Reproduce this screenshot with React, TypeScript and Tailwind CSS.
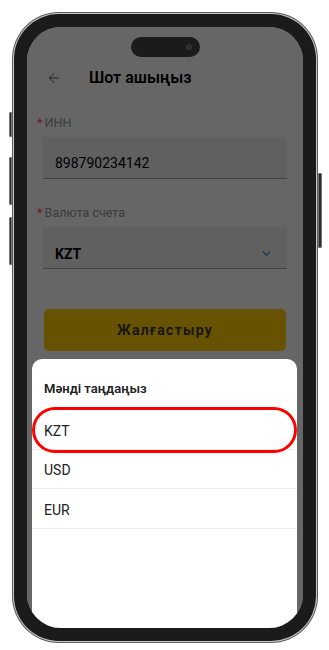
import { ArrowLeft, ChevronDown } from 'lucide-react';

const currencies = ['KZT', 'USD', 'EUR'];

function SideButton({ className }: { className: string }) {
  return <div className={`absolute w-[3px] rounded-l-[1px] bg-[#2a2a2a] border border-[#777] ${className}`} />;
}

function Field({ label, children }: { label: string; children: React.ReactNode }) {
  return (
    <div className="flex flex-col gap-[6px]">
      <div className="flex items-center h-[16px] px-[10px] text-[12.5px] text-[#969696]">
        <span className="text-[#ff4d4f] mr-[2px] text-[13px]">*</span>
        {label}
      </div>
      <div className="px-[16px]">{children}</div>
    </div>
  );
}

export default function App() {
  return (
    <div className="min-h-screen bg-white pt-[12px] pl-[12px]" style={{ fontFamily: 'Roboto, "Noto Sans", sans-serif' }}>
      <div className="relative w-[306px] h-[631px]">
        <SideButton className="left-[-3px] top-[100px] h-[25px]" />
        <SideButton className="left-[-3px] top-[145px] h-[48px]" />
        <SideButton className="left-[-3px] top-[205px] h-[48px]" />
        <div className="absolute right-[-4px] top-[161px] h-[75px] w-[4px] rounded-r-[1px] bg-[#2a2a2a] border border-[#777]" />

        <div className="w-full h-full rounded-[47px] bg-[#5c5c5c] p-[1px]">
          <div className="w-full h-full rounded-[46px] bg-[#c9c9c9] p-[1px]">
            <div className="w-full h-full rounded-[45px] bg-[#1b1b1b] p-[13px]">
              <div className="relative w-full h-full rounded-[34px] overflow-hidden bg-white flex flex-col">
                {/* dynamic island, kept above the dim layer */}
                <div className="relative z-10 mt-[10px] mx-auto w-[69px] h-[20px] rounded-full bg-[#1b1b1b] flex items-center justify-end pr-[8px]">
                  <div className="w-[6px] h-[6px] rounded-full bg-[#2c2c2c] border border-[#3a3a3a]" />
                </div>

                <div className="flex items-center h-[38px] pt-[3px] pl-[19px] gap-[27px]">
                  <ArrowLeft size={16} strokeWidth={1.5} className="text-[#555]" />
                  <span className="text-[16px] font-semibold text-black">Шот ашыңыз</span>
                </div>

                <div className="flex flex-col gap-[26px] mt-[20px]">
                  <Field label="ИНН">
                    <div className="h-[42px] bg-[#f0f0f0] border-b border-[#a5a5a5] flex items-end pb-[4px] px-[12px] text-[14px] text-black">
                      898790234142
                    </div>
                  </Field>
                  <Field label="Валюта счета">
                    <div className="h-[42px] bg-[#f0f0f0] border-b border-[#a5a5a5] flex items-end justify-between pb-[3px] pl-[12px] pr-[14px]">
                      <span className="text-[14px] font-bold text-black">KZT</span>
                      <ChevronDown size={13} strokeWidth={2.5} className="text-[#2f82c4] mb-[5px]" />
                    </div>
                  </Field>
                </div>

                <div className="px-[17px] mt-[40px]">
                  <button className="w-full h-[42px] rounded-[5px] bg-[#ffcd00] text-[14px] font-semibold tracking-[1.3px] text-[#333]">
                    Жалғастыру
                  </button>
                </div>

                {/* dim overlay */}
                <div className="absolute inset-0 bg-black/60" />

                {/* bottom sheet */}
                <div className="absolute left-[5px] right-[6px] top-[332px] bottom-0 bg-white rounded-t-[10px]">
                  <div className="h-[51px] flex items-center pl-[12px] pt-[8px] text-[13px] font-semibold text-[#222]">
                    Мәнді таңдаңыз
                  </div>
                  {currencies.map((c) => (
                    <div key={c} className="h-[39.5px] flex items-center pl-[12px] pt-[4px] border-b border-[#ececec] text-[14px] text-[#222]">
                      {c}
                    </div>
                  ))}
                  <div className="absolute left-0 right-0 top-[48px] h-[46px] rounded-full border-[3px] border-[#ff0000]" />
                </div>
              </div>
            </div>
          </div>
        </div>
      </div>
    </div>
  );
}
